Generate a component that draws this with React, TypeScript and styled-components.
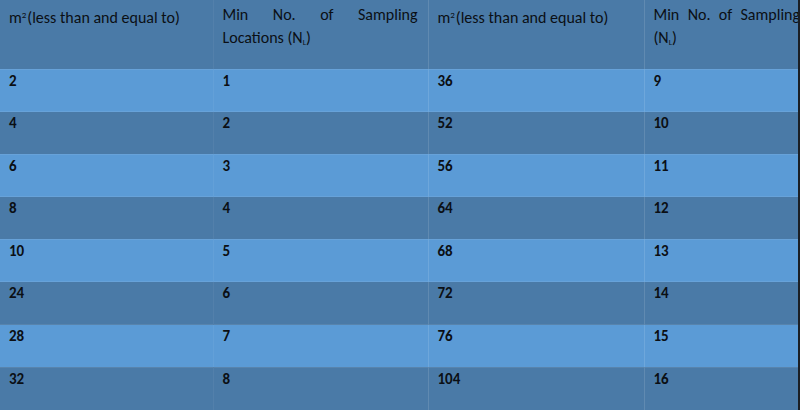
import styled, { createGlobalStyle } from "styled-components";

const colors = {
  page: "#1b1f24",
  dark: "#4a7aa7",
  light: "#5b9bd6",
  text: "#0b0f14",
  line: "rgba(255, 255, 255, 0.12)",
  faint: "rgba(255, 255, 255, 0.05)",
};

const GlobalStyle = createGlobalStyle`
  html, body {
    margin: 0;
    padding: 0;
    background: ${colors.page};
  }
  body {
    font-family: Carlito, Lato, "Liberation Sans", sans-serif;
  }
`;

const Frame = styled.div`
  width: 798px;
  height: 410px;
  overflow: hidden;
  background: ${colors.dark};
`;

const Table = styled.table`
  width: 810px;
  table-layout: fixed;
  border-collapse: collapse;
  color: ${colors.text};
`;

const Row = styled.tr<{ $light?: boolean }>`
  background: ${(p) => (p.$light ? colors.light : colors.dark)};
  height: 42.6px;
`;

const HeadRow = styled.tr`
  background: ${colors.dark};
  height: 69px;
`;

const HeadCell = styled.th<{ $justify?: boolean }>`
  font-size: 16px;
  font-weight: 400;
  text-align: ${(p) => (p.$justify ? "justify" : "left")};
  text-align-last: left;
  vertical-align: top;
  padding: 3px 10px 0 9px;
  line-height: 23px;
  & + & {
    border-left: 1px solid ${colors.line};
  }
  &:nth-child(2) {
    border-left-color: ${colors.faint};
  }
`;

const Cell = styled.td`
  font-size: 15px;
  font-weight: 700;
  vertical-align: top;
  padding: 0 10px 0 9px;
  line-height: 23px;
  border-top: 1px solid rgba(255, 255, 255, 0.08);
  & + & {
    border-left: 1px solid ${colors.line};
  }
  &:nth-child(2) {
    border-left-color: ${colors.faint};
  }
`;

const Sup = styled.sup`
  font-size: 9px;
  vertical-align: 5px;
  margin-right: 1px;
`;

const Sub = styled.sub`
  font-size: 8px;
  vertical-align: -2px;
`;

const rows = [
  ["2", "1", "36", "9"],
  ["4", "2", "52", "10"],
  ["6", "3", "56", "11"],
  ["8", "4", "64", "12"],
  ["10", "5", "68", "13"],
  ["24", "6", "72", "14"],
  ["28", "7", "76", "15"],
  ["32", "8", "104", "16"],
];

const widths = [213, 215, 216, 166];

function App() {
  return (
    <>
      <GlobalStyle />
      <Frame>
        <Table>
          <colgroup>
            {widths.map((w, i) => (
              <col key={i} style={{ width: w }} />
            ))}
          </colgroup>
          <thead>
            <HeadRow>
              <HeadCell>
                m<Sup>2</Sup>(less than and equal to)
              </HeadCell>
              <HeadCell $justify>
                Min No. of Sampling Locations (N<Sub>L</Sub>)
              </HeadCell>
              <HeadCell>
                m<Sup>2</Sup>(less than and equal to)
              </HeadCell>
              <HeadCell $justify>
                Min No. of Sampling (N<Sub>L</Sub>)
              </HeadCell>
            </HeadRow>
          </thead>
          <tbody>
            {rows.map((r, i) => (
              <Row key={i} $light={i % 2 === 0}>
                {r.map((v, j) => (
                  <Cell key={j}>{v}</Cell>
                ))}
              </Row>
            ))}
          </tbody>
        </Table>
      </Frame>
    </>
  );
}

export default App;
